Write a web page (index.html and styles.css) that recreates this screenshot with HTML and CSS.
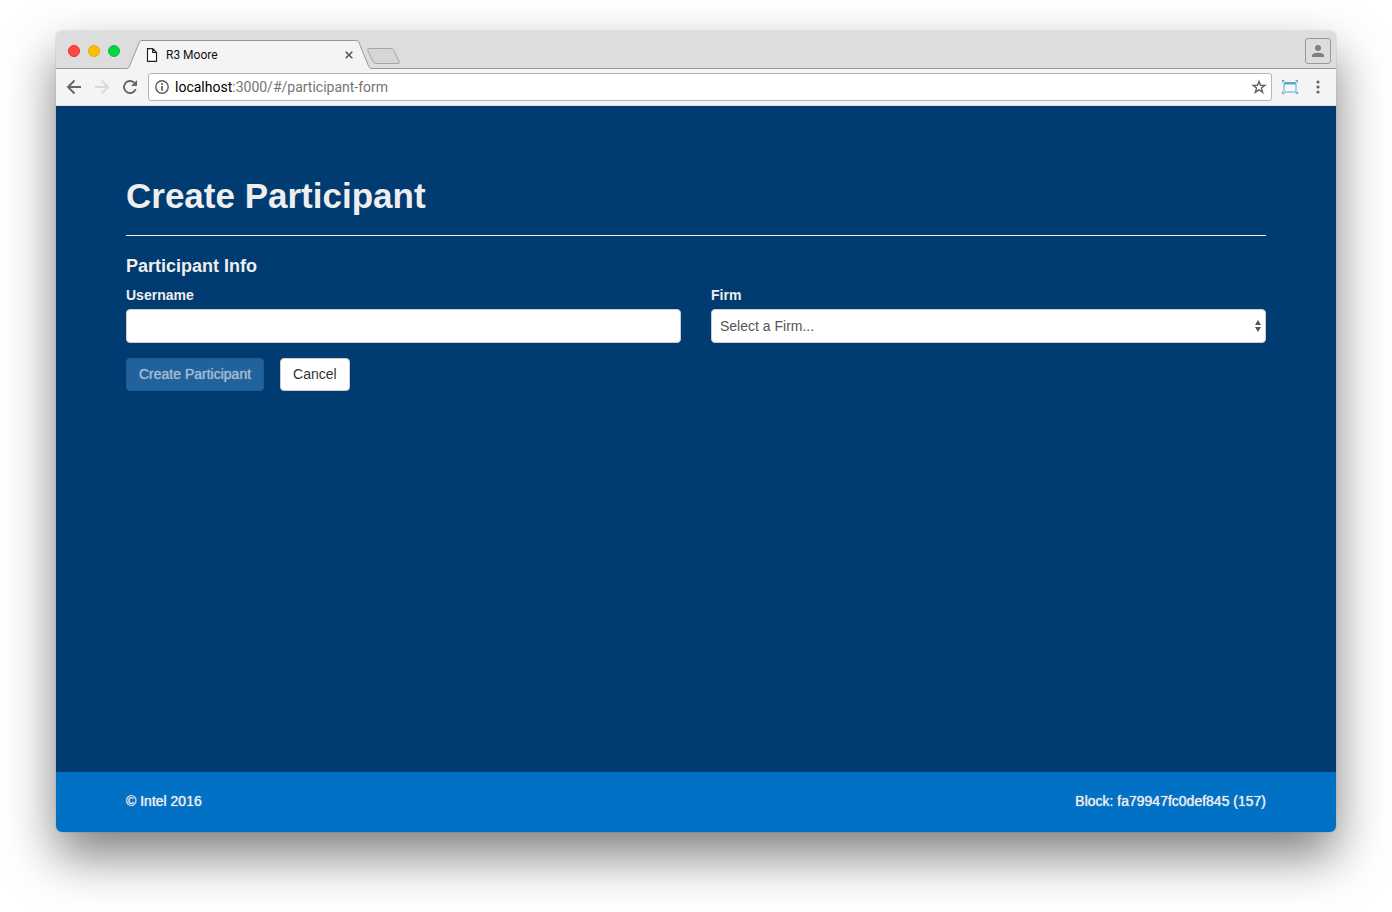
FILE: index.html
```html
<!DOCTYPE html>
<html lang="en">
<head>
<meta charset="utf-8">
<meta name="viewport" content="width=device-width, initial-scale=1">
<title>R3 Moore</title>
<link rel="stylesheet" href="styles.css">
</head>
<body>
<div class="window">
  <header class="tabstrip">
    <div class="lights">
      <button class="light close" aria-label="Close window"></button>
      <button class="light minimize" aria-label="Minimize window"></button>
      <button class="light maximize" aria-label="Maximize window"></button>
    </div>
    <div class="tab">
      <svg class="tab-shape" width="275" height="29" viewBox="0 0 275 29" aria-hidden="true">
        <path d="M0 29V28.5C2 28.500 3 27.500 3.500 26L13 3C13.700 1.200 14.500 .5 16 .5H230C231.500 .5 232.500 1.200 233.200 3L242.500 26C243.200 27.700 244 28.500 246 28.500V29Z" fill="#f4f4f4"/>
        <path d="M0 28.500C2 28.500 3 27.700 3.500 26L13 3C13.700 1.200 14.500 .5 16 .5H230C231.500 .5 232.500 1.200 233.200 3L242.500 26C243.200 27.700 244 28.500 246 28.500" fill="none" stroke="#999"/>
        <path d="M243 8.500H265Q267 8.500 268 10.500L273 21.500Q274 23.500 272 23.500H250Q248 23.500 247 21.500L241.800 10.500Q241 8.500 243 8.500Z" fill="#d6d6d6" stroke="#a6a6a6"/>
      </svg>
      <svg class="page-icon" width="12" height="14" viewBox="0 0 12 14" aria-hidden="true"><path d="M1.500 .7H6.700L10.500 4.500V13.300H1.500ZM6.700 .7V4.500H10.500" fill="#fff" stroke="#222" stroke-width="1.200"/></svg>
      <span class="tab-title">R3 Moore</span>
      <button class="plain tab-close" aria-label="Close tab"><svg width="8" height="8" viewBox="0 0 8 8"><path d="M.7 .7L7.300 7.300M7.300 .7L.7 7.300" stroke="#555" stroke-width="1.600"/></svg></button>
    </div>
    <button class="profile" aria-label="Profile"><svg width="12" height="12" viewBox="0 0 12 12"><circle cx="6" cy="3" r="3" fill="#808080"/><path d="M0 12V10.500C0 8.500 3.500 7.700 6 7.700S12 8.500 12 10.500V12Z" fill="#808080"/></svg></button>
  </header>
  <nav class="toolbar" aria-label="Browser">
    <button class="plain" aria-label="Back"><svg width="16" height="16" viewBox="0 0 16 16"><path d="M15 8H2M8.500 1.500L2 8L8.500 14.500" fill="none" stroke="#666" stroke-width="1.900"/></svg></button>
    <button class="plain" aria-label="Forward" disabled><svg width="16" height="16" viewBox="0 0 16 16"><path d="M1 8H14M7.500 1.500L14 8L7.500 14.500" fill="none" stroke="#dadada" stroke-width="1.900"/></svg></button>
    <button class="plain" aria-label="Reload"><svg width="16" height="16" viewBox="0 0 16 16"><path d="M13.700 10A6 6 0 1 1 12.200 3.700" fill="none" stroke="#666" stroke-width="1.900"/><path d="M15 1V7H9Z" fill="#666"/></svg></button>
    <div class="address">
      <svg width="14" height="14" viewBox="0 0 14 14" aria-hidden="true"><circle cx="7" cy="7" r="6.200" fill="none" stroke="#5c5c5c" stroke-width="1.400"/><path d="M7 6V10.700M7 3.300V5" stroke="#5c5c5c" stroke-width="1.700"/></svg>
      <span class="url"><span class="host">localhost</span>:3000/#/participant-form</span>
      <button class="plain" aria-label="Bookmark"><svg width="16" height="16" viewBox="0 0 16 16"><path d="M8 2.300L9.500 6.300H13.900L10.400 8.900L11.700 13.300L8 10.700L4.300 13.300L5.600 8.900L2.100 6.300H6.500Z" fill="none" stroke="#5c5c5c" stroke-width="1.300"/></svg></button>
    </div>
    <button class="plain" aria-label="Resize window"><svg width="16" height="16" viewBox="0 0 16 16"><rect x="2" y="3.500" width="12" height="9.500" rx="1" fill="#f1f8fb" stroke="#5aa9d4"/><path d="M2 3.500H14V5.500H2Z" fill="#5aa9d4"/><path d="M0 1H3L0 4ZM16 1H13L16 4ZM0 15H3L0 12ZM16 15H13L16 12Z" fill="#5aa9d4"/></svg></button>
    <button class="plain menu" aria-label="Menu"><svg width="4" height="14" viewBox="0 0 4 14"><circle cx="2" cy="2" r="1.600" fill="#666"/><circle cx="2" cy="7" r="1.600" fill="#666"/><circle cx="2" cy="12" r="1.600" fill="#666"/></svg></button>
  </nav>
  <main class="page">
    <h1>Create Participant</h1>
    <form>
      <h2>Participant Info</h2>
      <div class="fields">
        <div class="field">
          <label for="username">Username</label>
          <input class="control" id="username" type="text">
        </div>
        <div class="field">
          <label for="firm">Firm</label>
          <div class="select-wrap">
            <select class="control" id="firm"><option>Select a Firm...</option></select>
            <svg class="arrows" width="6" height="12" viewBox="0 0 6 12" aria-hidden="true"><path d="M0 5L3 0L6 5ZM0 7H6L3 12Z" fill="#555"/></svg>
          </div>
        </div>
      </div>
      <div class="actions">
        <button class="btn primary" type="submit" disabled>Create Participant</button>
        <button class="btn" type="button">Cancel</button>
      </div>
    </form>
  </main>
  <footer class="footer">
    <span>© Intel 2016</span>
    <span>Block: fa79947fc0def845 (157)</span>
  </footer>
</div>
</body>
</html>
```

FILE: styles.css
```css
* { box-sizing: border-box; }

body {
  margin: 0;
  min-height: 100vh;
  padding: 31px 56px 80px;
  display: flex;
  background: #fff;
  font: 14px/20px "Liberation Sans", Arial, sans-serif;
}

.window {
  flex: 1;
  min-width: 0;
  display: flex;
  flex-direction: column;
  border-radius: 6px;
  overflow: hidden;
  box-shadow: 0 0 1px rgba(0, 0, 0, .5), 0 24px 50px rgba(0, 0, 0, .5);
}

button { cursor: pointer; }

.plain {
  display: flex;
  padding: 0;
  border: 0;
  background: none;
}

.tabstrip {
  display: flex;
  align-items: flex-end;
  height: 38px;
  padding-left: 12px;
  background: linear-gradient(#999, #999) bottom / 100% 1px no-repeat, #ddd;
  font: 12px/16px Roboto, sans-serif;
}

.lights {
  display: flex;
  gap: 8px;
  padding-bottom: 12px;
}

.light {
  width: 12px;
  height: 12px;
  padding: 0;
  border: 1px solid;
  border-radius: 50%;
}

.close { background: #ff4744; border-color: #ee2f2f; }
.minimize { background: #ffbd00; border-color: #e8a41a; }
.maximize { background: #00d742; border-color: #12bd3e; }

.tab {
  position: relative;
  display: flex;
  align-items: center;
  width: 246px;
  height: 29px;
  margin-left: 6px;
  padding: 0 19px 0 20px;
}

.tab-shape {
  position: absolute;
  left: 0;
  top: 0;
}

.page-icon, .tab-title, .tab-close { position: relative; }
.tab-title { flex: 1; margin-left: 8px; color: #111; }

.profile {
  display: flex;
  align-items: center;
  justify-content: center;
  width: 26px;
  height: 26px;
  margin: 0 5px 5px auto;
  padding: 0;
  border: 1px solid #999;
  border-radius: 3px;
  background: #ddd;
}

.toolbar {
  display: flex;
  align-items: center;
  gap: 12px;
  height: 37px;
  padding: 0 16px 0 10px;
  background: #f4f4f4;
  border-bottom: 1px solid #ddd;
}

.address {
  flex: 1;
  display: flex;
  align-items: center;
  gap: 6px;
  height: 28px;
  margin: 0 -2px;
  padding: 0 4px 0 6px;
  border: 1px solid #b5b5b5;
  border-radius: 3px;
  background: #fff;
  font: 14px/20px Roboto, sans-serif;
}

.url { flex: 1; color: #757575; }
.host { color: #000; }
.menu { margin-left: 6px; }

.page {
  flex: 1;
  padding: 68px 70px 40px;
  background: #003c71;
  color: #eee;
}

h1 {
  margin: 0 0 20px;
  padding-bottom: 17px;
  border-bottom: 1px solid #eee;
  font-size: 35px;
  line-height: 44px;
  font-weight: 700;
}

h2 {
  margin: 0 0 9px;
  font-size: 18px;
  line-height: 20px;
  font-weight: 700;
}

.fields {
  display: grid;
  grid-template-columns: 1fr 1fr;
  gap: 30px;
}

.field label {
  display: block;
  margin-bottom: 4px;
  font-weight: 700;
}

.select-wrap { position: relative; }

.control {
  display: block;
  width: 100%;
  height: 34px;
  padding: 6px 8px;
  border: 1px solid #ccc;
  border-radius: 4px;
  background: #fff;
  color: #555;
  font: inherit;
  appearance: none;
}

.arrows {
  position: absolute;
  right: 5px;
  top: 11px;
  pointer-events: none;
}

.actions {
  display: flex;
  gap: 16px;
  margin-top: 15px;
}

.btn {
  padding: 6px 12px;
  border: 1px solid #ccc;
  border-radius: 4px;
  background: #fff;
  color: #333;
  font: inherit;
  line-height: 19px;
}

.primary {
  border-color: #1d5d96;
  background: #21629c;
  color: #a2bcd3;
  text-shadow: 0 0 1px #a2bcd3;
}

.footer {
  display: flex;
  justify-content: space-between;
  padding: 19px 70px 21px;
  background: #0071c5;
  color: #eee;
  text-shadow: 0 0 1px #eee;
}
```
